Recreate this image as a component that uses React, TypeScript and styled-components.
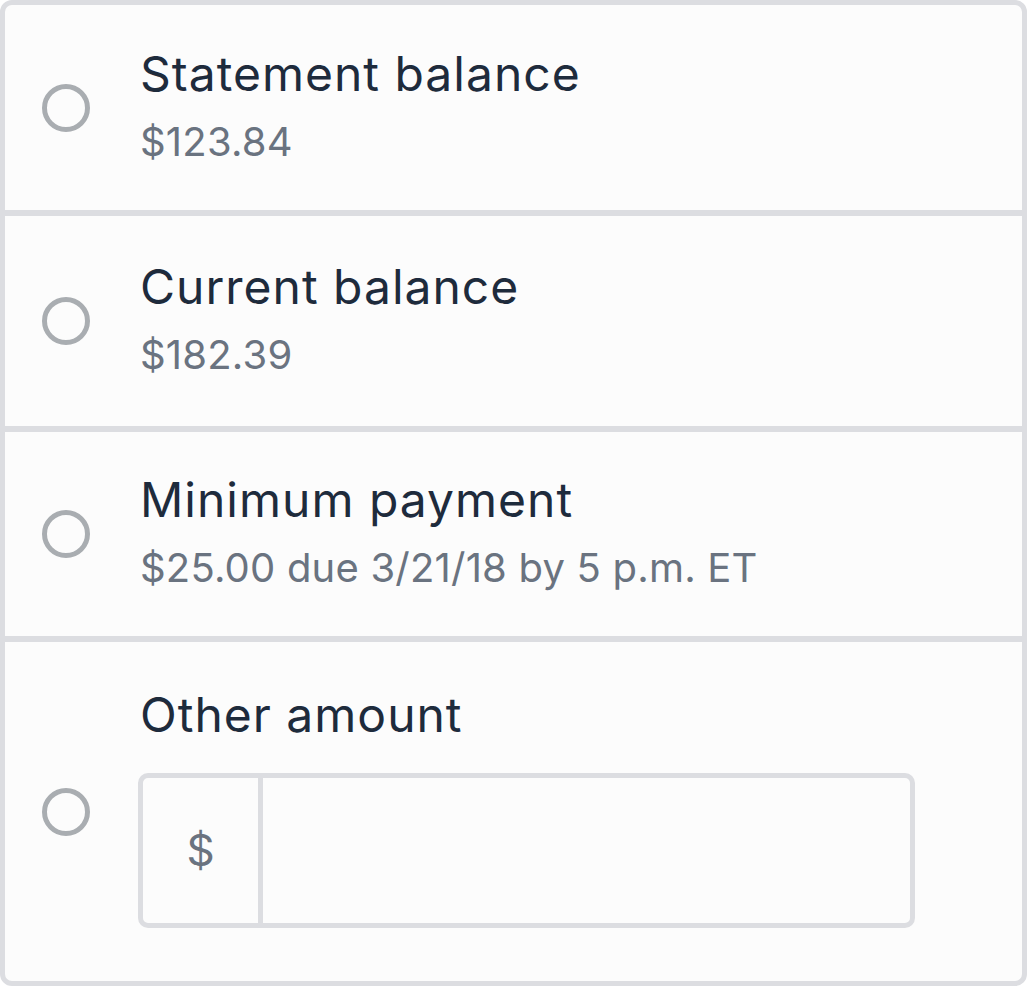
import React from "react";
import styled, { createGlobalStyle } from "styled-components";

const Global = createGlobalStyle`
  html, body { margin: 0; padding: 0; background: #ffffff; }
  * { box-sizing: border-box; }
`;

const Card = styled.div`
  width: 1027px;
  border: 5px solid #dcdde1;
  border-radius: 12px;
  background: #fcfcfc;
  font-family: "Inter", "Liberation Sans", sans-serif;
  overflow: hidden;
`;

const Option = styled.label<{ $h: number; $first?: boolean }>`
  display: flex;
  align-items: center;
  gap: 50px;
  height: ${(p) => p.$h}px;
  padding-left: 37px;
  border-top: ${(p) => (p.$first ? "none" : "6px solid #dcdde1")};
  cursor: pointer;
`;

const Radio = styled.span`
  flex: none;
  width: 48px;
  height: 48px;
  border-radius: 50%;
  border: 5px solid #a9adb1;
  background: #fcfcfc;
`;

const TextBlock = styled.div<{ $lift?: number }>`
  display: flex;
  flex-direction: column;
  margin-bottom: ${(p) => (p.$lift ? p.$lift * 2 : 0)}px;
`;

const Title = styled.div`
  font-size: 48px;
  line-height: 54px;
  letter-spacing: 1px;
  color: #1e2b3c;
  font-weight: 400;
`;

const Sub = styled.div`
  font-size: 40px;
  line-height: 54px;
  margin-top: 14px;
  letter-spacing: 0.2px;
  color: #6a7380;
`;

const InputBox = styled.div`
  display: flex;
  width: 777px;
  height: 155px;
  margin-top: 31px;
  margin-left: -2px;
  border: 5px solid #dcdde1;
  border-radius: 10px;
  background: #fcfcfc;
`;

const Prefix = styled.div`
  flex: none;
  width: 120px;
  display: flex;
  align-items: center;
  justify-content: center;
  border-right: 5px solid #dcdde1;
  font-size: 44px;
  color: #6a7380;
`;

const Field = styled.input`
  flex: 1;
  border: none;
  outline: none;
  background: transparent;
  font-family: inherit;
  font-size: 44px;
  color: #1e2b3c;
  padding: 0 24px;
`;

const options = [
  { title: "Statement balance", sub: "$123.84", h: 205 },
  { title: "Current balance", sub: "$182.39", h: 216 },
  { title: "Minimum payment", sub: "$25.00 due 3/21/18 by 5 p.m. ET", h: 210 },
];

export default function App() {
  return (
    <>
      <Global />
      <Card>
        {options.map((o, i) => (
          <Option key={o.title} $h={o.h} $first={i === 0}>
            <Radio />
            <TextBlock>
              <Title>{o.title}</Title>
              <Sub>{o.sub}</Sub>
            </TextBlock>
          </Option>
        ))}
        <Option $h={345}>
          <Radio />
          <TextBlock $lift={4}>
            <Title>Other amount</Title>
            <InputBox>
              <Prefix>$</Prefix>
              <Field type="text" aria-label="Other amount" />
            </InputBox>
          </TextBlock>
        </Option>
      </Card>
    </>
  );
}
